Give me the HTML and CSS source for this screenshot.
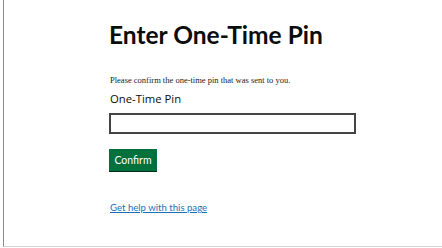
FILE: index.html
```html
<!DOCTYPE html>
<html lang="en">
<head>
<meta charset="utf-8">
<title>Enter One-Time Pin</title>
<link rel="stylesheet" href="styles.css">
</head>
<body>
<div class="frame">
  <main class="content">
    <h1 class="title">Enter One-Time Pin</h1>
    <p class="intro">Please confirm the one-time pin that was sent to you.</p>
    <label class="label" for="pin">One-Time Pin</label>
    <input class="input" id="pin" type="text">
    <button class="button" type="button">Confirm</button>
    <a class="help" href="#">Get help with this page</a>
  </main>
</div>
</body>
</html>
```
FILE: styles.css
```css
html, body {
  margin: 0;
  padding: 0;
  background: #ffffff;
}
.frame {
  margin-left: 3px;
  height: 247px;
  border-left: 1px solid #8c8c8c;
  border-bottom: 1px solid #d4d4d4;
  box-sizing: border-box;
}
.content {
  display: flex;
  flex-direction: column;
  align-items: flex-start;
  padding: 20px 0 0 105px;
  font-family: "Lato", "Liberation Sans", sans-serif;
}
.title {
  margin: 0;
  font-size: 24.5px;
  font-weight: 700;
  line-height: 30px;
  color: #0b0c0c;
}
.intro {
  margin: 24px 0 0 1px;
  font-family: "Liberation Serif", serif;
  font-size: 8.5px;
  line-height: 12px;
  color: #222;
}
.label {
  margin: 6px 0 0 1px;
  font-family: "Open Sans", "Noto Sans", sans-serif;
  font-size: 11.3px;
  line-height: 14px;
  color: #0b0c0c;
}
.input {
  margin: 7px 0 0 0;
  width: 247px;
  height: 21px;
  box-sizing: border-box;
  border: 2px solid #444;
  padding: 0 4px;
  font-size: 10px;
  background: #fff;
}
.button {
  margin-top: 15px;
  width: 48px;
  height: 22px;
  border: 0;
  padding: 0;
  background: #00703c;
  color: #fff;
  font-family: "Lato", "Liberation Sans", sans-serif;
  font-size: 10.5px;
  line-height: 22px;
  box-shadow: 0 1px 0 #002d18;
}
.help {
  margin: 30px 0 0 1px;
  font-size: 9.6px;
  line-height: 14px;
  color: #1d70b8;
  text-decoration: underline;
  text-underline-offset: 1px;
}
```
